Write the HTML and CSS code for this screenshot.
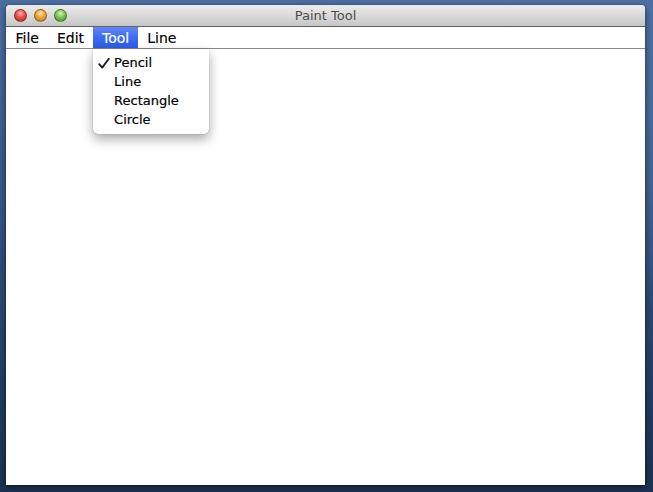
FILE: index.html
```html
<!DOCTYPE html>
<html>
<head>
<meta charset="utf-8">
<title>Paint Tool</title>
<link rel="stylesheet" href="styles.css">
</head>
<body>
<div class="desktop">
  <div class="window">
    <div class="titlebar">
      <div class="lights">
        <span class="light red"></span>
        <span class="light yellow"></span>
        <span class="light green"></span>
      </div>
      <div class="title">Paint Tool</div>
    </div>
    <div class="menubar">
      <div class="menu">File</div>
      <div class="menu">Edit</div>
      <div class="menu open">Tool
        <div class="dropdown">
          <div class="item"><svg class="check" width="12" height="11" viewBox="0 0 12 11"><path d="M1.2 6.2 L4.2 9.6 L10.8 0.8" fill="none" stroke="#1a1a1a" stroke-width="1.8" stroke-linecap="round" stroke-linejoin="round"/></svg>Pencil</div>
          <div class="item">Line</div>
          <div class="item">Rectangle</div>
          <div class="item">Circle</div>
        </div>
      </div>
      <div class="menu">Line</div>
    </div>
    <div class="canvas"></div>
  </div>
</div>
</body>
</html>
```
FILE: styles.css
```css
html, body {
  margin: 0;
  padding: 0;
  width: 653px;
  height: 492px;
  overflow: hidden;
}
body {
  font-family: "DejaVu Sans", "Liberation Sans", sans-serif;
}
.desktop {
  width: 653px;
  height: 492px;
  padding: 5px 0 0 6px;
  box-sizing: border-box;
  background:
    radial-gradient(ellipse 420px 300px at 520px 120px, rgba(90,125,175,0.55), rgba(90,125,175,0) 70%),
    linear-gradient(180deg, #4b6ea1 0%, #36578a 40%, #263f66 75%, #1c3253 100%);
}
.window {
  width: 639px;
  height: 480px;
  display: flex;
  flex-direction: column;
  background: #fff;
  border-radius: 4px 4px 0 0;
  box-shadow: 0 2px 6px rgba(0,0,0,0.55), 0 0 1px rgba(0,0,0,0.6);
}
.titlebar {
  height: 21px;
  flex: 0 0 21px;
  position: relative;
  display: flex;
  align-items: center;
  border-radius: 4px 4px 0 0;
  background: linear-gradient(180deg, #ececec 0%, #dadada 50%, #c6c6c6 100%);
  border-bottom: 1px solid #5f5f5f;
}
.lights {
  display: flex;
  gap: 7px;
  padding-left: 8px;
  position: relative;
  z-index: 1;
}
.light {
  width: 13px;
  height: 13px;
  border-radius: 50%;
  box-sizing: border-box;
  border: 1px solid rgba(0,0,0,0.35);
}
.red {
  background: radial-gradient(circle at 50% 30%, #ffb3ad 0%, #e9514a 45%, #b51f17 100%);
}
.yellow {
  background: radial-gradient(circle at 50% 30%, #ffe2a8 0%, #eaa83b 45%, #b7700c 100%);
}
.green {
  background: radial-gradient(circle at 50% 30%, #d4f5b8 0%, #7cc454 45%, #3f8a1f 100%);
}
.title {
  position: absolute;
  left: 0;
  right: 0;
  top: 0;
  bottom: 0;
  display: flex;
  align-items: center;
  justify-content: center;
  font-size: 13px;
  color: #4a4a4a;
}
.menubar {
  height: 21px;
  flex: 0 0 21px;
  display: flex;
  padding-left: 0;
  background: #fff;
  border-bottom: 1px solid #8a8a8a;
  font-size: 14px;
  color: #000;
  position: relative;
  z-index: 2;
}
.menu {
  padding: 0 9px;
  display: flex;
  align-items: center;
  position: relative;
  -webkit-text-stroke: 0.15px currentColor;
}
.menu:first-child {
  padding-left: 9.5px;
}
.menu.open {
  color: #fff;
  background: linear-gradient(180deg, #6187f5 0%, #3b6cf0 50%, #2a5ce8 100%);
}
.dropdown {
  position: absolute;
  left: 0;
  top: 22px;
  width: 116px;
  padding: 4px 0 5px;
  background: #fff;
  color: #000;
  font-size: 13px;
  border-radius: 0 0 5px 5px;
  box-shadow: 0 5px 12px rgba(0,0,0,0.35), 0 0 1px rgba(0,0,0,0.45);
}
.item {
  height: 19px;
  line-height: 19px;
  padding-left: 21px;
  position: relative;
  -webkit-text-stroke: 0.2px #000;
}
.check {
  position: absolute;
  left: 5px;
  top: 5px;
}
.canvas {
  flex: 1;
  background: #fff;
}
```
